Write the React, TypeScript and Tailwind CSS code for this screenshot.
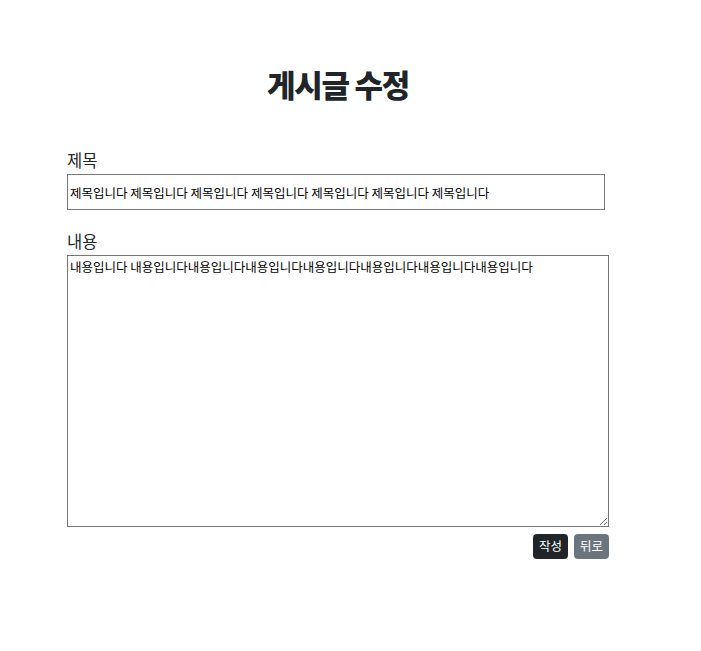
import { useState } from 'react';

const KR = "font-['Noto_Sans_CJK_KR',sans-serif]";

export default function App() {
  const [title, setTitle] = useState(Array(7).fill('제목입니다').join(' '));
  const [content, setContent] = useState('내용입니다 ' + Array(7).fill('내용입니다').join(''));

  return (
    <div className={`min-h-[651px] bg-white ${KR}`}>
      <div className="ml-[67px] w-[542px] pt-[64px] flex flex-col">
        {/* 제목 */}
        <h1 className="h-[40px] leading-[40px] text-center text-[31px] font-black tracking-[-1.25px] text-[#212529]">
          게시글 수정
        </h1>

        <label className="mt-[46px] h-[20px] leading-[20px] text-[16.5px] text-[#212529]">제목</label>
        <input
          className="mt-[4px] w-[538px] h-[36px] border border-[#767676] px-[2px] text-[12.5px] text-black outline-none"
          value={title}
          onChange={(e) => setTitle(e.target.value)}
        />

        <label className="mt-[21px] h-[20px] leading-[20px] text-[16.5px] text-[#212529]">내용</label>
        <textarea
          className="mt-[4px] w-[542px] h-[272px] border border-[#767676] px-[2px] py-[2px] text-[12.5px] leading-[18px] text-black outline-none"
          value={content}
          onChange={(e) => setContent(e.target.value)}
        />

        {/* 버튼 */}
        <div className="mt-[7px] flex justify-end gap-[6px]">
          <button className="w-[35px] h-[25px] rounded-[4px] bg-[#212529] text-white text-[12.5px]">작성</button>
          <button className="w-[35px] h-[25px] rounded-[4px] bg-[#6c757d] text-white text-[12.5px]">뒤로</button>
        </div>
      </div>
    </div>
  );
}
